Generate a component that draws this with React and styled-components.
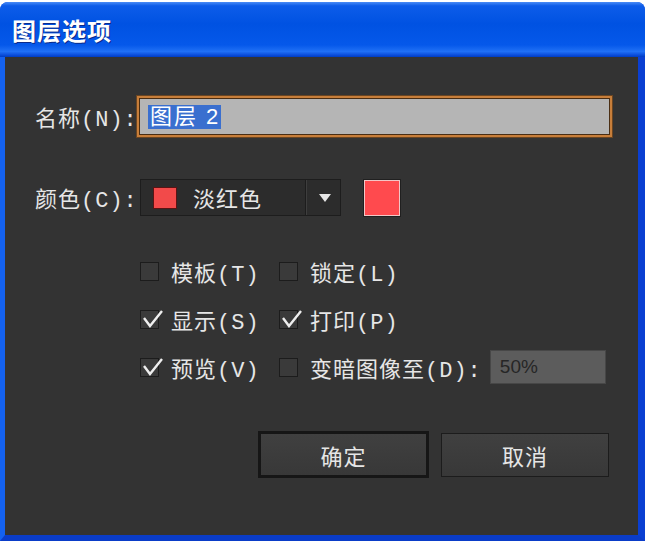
import styled, { createGlobalStyle } from "styled-components";

const GlobalStyle = createGlobalStyle`
  body {
    margin: 0;
    background: #ffffff;
  }
`;

const options = [
  { label: "模板(T)", checked: false },
  { label: "锁定(L)", checked: false },
  { label: "显示(S)", checked: true },
  { label: "打印(P)", checked: true },
  { label: "预览(V)", checked: true },
];

function CheckBox({ checked, children }) {
  return (
    <CheckItem>
      <Box>
        {checked && (
          <CheckMark viewBox="0 0 22 20">
            <polyline points="2,9 8,17 20,2" />
          </CheckMark>
        )}
      </Box>
      <CheckLabel>{children}</CheckLabel>
    </CheckItem>
  );
}

export default function App() {
  return (
    <>
      <GlobalStyle />
      <Window>
        <TitleBar>
          <Title>图层选项</Title>
        </TitleBar>
        <Frame>
          <Body>
            <Row>
              <Label>名称(N):</Label>
              <NameInput>
                <Selected>图层 2</Selected>
              </NameInput>
            </Row>
            <ColorRow>
              <Label>颜色(C):</Label>
              <Select>
                <SmallSwatch />
                <SelectText>淡红色</SelectText>
                <Divider />
                <Arrow />
              </Select>
              <BigSwatch />
            </ColorRow>
            <Options>
              {options.map((o) => (
                <CheckBox key={o.label} checked={o.checked}>
                  {o.label}
                </CheckBox>
              ))}
              <CheckItem>
                <CheckBox checked={false}>变暗图像至(D):</CheckBox>
                <Percent>50%</Percent>
              </CheckItem>
            </Options>
            <Buttons>
              <Button $primary>确定</Button>
              <Button>取消</Button>
            </Buttons>
          </Body>
        </Frame>
      </Window>
    </>
  );
}

const Window = styled.div`
  width: 645px;
  height: 539px;
  margin-top: 2px;
  display: flex;
  flex-direction: column;
  border-radius: 8px 8px 0 0;
  overflow: hidden;
  background: #0a48dc;
`;

const TitleBar = styled.div`
  height: 55px;
  flex-shrink: 0;
  display: flex;
  align-items: center;
  padding-left: 12px;
  background: linear-gradient(
    180deg,
    #4a8cf6 0%,
    #0d5ce9 7%,
    #0052e2 40%,
    #0558ea 78%,
    #2070f5 90%,
    #0c4fdc 96%,
    #003cc2 100%
  );
`;

const Title = styled.span`
  font-family: "Noto Sans CJK SC", sans-serif;
  font-weight: 700;
  font-size: 24px;
  color: #ffffff;
  text-shadow: 1px 1px 0 #0b2a8a;
  letter-spacing: 1px;
`;

const Frame = styled.div`
  flex: 1;
  display: flex;
  border-left: 5px solid #1462f0;
  border-right: 7px solid #0a3fd2;
  border-bottom: 6px solid #0a3cc8;
`;

const Body = styled.div`
  flex: 1;
  background: #333333;
  padding: 39px 26px 0 30px;
  font-family: "Liberation Mono", "Noto Sans CJK SC", monospace;
  font-size: 22px;
  letter-spacing: 1px;
  color: #e6e6e6;
`;

const Row = styled.div`
  display: flex;
  align-items: center;
`;

const ColorRow = styled(Row)`
  margin-top: 42px;
`;

const Label = styled.span`
  width: 102px;
  flex-shrink: 0;
  white-space: nowrap;
`;

const NameInput = styled.div`
  flex: 1;
  height: 41px;
  box-sizing: border-box;
  display: flex;
  align-items: center;
  padding-left: 9px;
  background: #b5b5b5;
  border: 2px solid #c77e3a;
  box-shadow: inset 0 0 0 1px #4a2e14, 0 0 0 1px #6a4522;
`;

const Selected = styled.span`
  font-family: "Liberation Sans", "Noto Sans CJK SC", sans-serif;
  font-size: 22px;
  line-height: 24px;
  letter-spacing: 2px;
  color: #ffffff;
  background: #3a6fcf;
  padding: 0 1px 0 2px;
  white-space: pre;
`;

const Select = styled.div`
  margin-left: 3px;
  width: 201px;
  height: 37px;
  box-sizing: border-box;
  display: flex;
  align-items: center;
  padding-left: 12px;
  background: #2c2c2c;
  border: 1px solid #1d1d1d;
`;

const SmallSwatch = styled.div`
  width: 24px;
  height: 22px;
  box-sizing: border-box;
  background: #f24a4a;
  border: 1px solid #5a1414;
`;

const SelectText = styled.span`
  margin-left: 16px;
  width: 112px;
`;

const Divider = styled.div`
  width: 1px;
  height: 100%;
  background: #1d1d1d;
  box-shadow: 1px 0 0 #3e3e3e;
`;

const Arrow = styled.div`
  margin-left: 13px;
  width: 0;
  height: 0;
  border-left: 6px solid transparent;
  border-right: 6px solid transparent;
  border-top: 8px solid #e6e6e6;
`;

const BigSwatch = styled.div`
  margin-left: 23px;
  width: 36px;
  height: 36px;
  box-sizing: border-box;
  background: #ff4a4e;
  border: 1px solid #f3c6c6;
  box-shadow: 0 0 0 1px #202020;
`;

const Options = styled.div`
  margin-top: 31px;
  margin-left: 105px;
  display: grid;
  grid-template-columns: 139px auto;
  grid-auto-rows: 48px;
  align-items: center;
`;

const CheckItem = styled.div`
  display: flex;
  align-items: center;
`;

const Box = styled.div`
  position: relative;
  width: 19px;
  height: 19px;
  flex-shrink: 0;
  box-sizing: border-box;
  background: #3a3a3a;
  border: 1px solid #1c1c1c;
`;

const CheckMark = styled.svg`
  position: absolute;
  left: 1px;
  top: -2px;
  width: 22px;
  height: 20px;
  fill: none;
  stroke: #eeeeee;
  stroke-width: 2.4;
`;

const CheckLabel = styled.span`
  margin-left: 12px;
  white-space: nowrap;
`;

const Percent = styled.div`
  margin-left: 8px;
  width: 116px;
  height: 34px;
  box-sizing: border-box;
  display: flex;
  align-items: center;
  padding-left: 9px;
  background: #5c5c5c;
  border: 1px solid #474747;
  font-family: "Liberation Sans", sans-serif;
  font-size: 19px;
  letter-spacing: 0;
  color: #262626;
`;

const Buttons = styled.div`
  margin-top: 40px;
  padding-right: 3px;
  display: flex;
  justify-content: flex-end;
  align-items: center;
  gap: 12px;
`;

const Button = styled.div`
  width: ${(p) => (p.$primary ? "171px" : "168px")};
  height: ${(p) => (p.$primary ? "47px" : "44px")};
  box-sizing: border-box;
  display: flex;
  align-items: center;
  justify-content: center;
  background: linear-gradient(180deg, #404040, #383838);
  border: ${(p) => (p.$primary ? "3px solid #161616" : "1px solid #1c1c1c")};
  font-family: "Noto Sans CJK SC", sans-serif;
  font-size: 22px;
  color: #e6e6e6;
`;
